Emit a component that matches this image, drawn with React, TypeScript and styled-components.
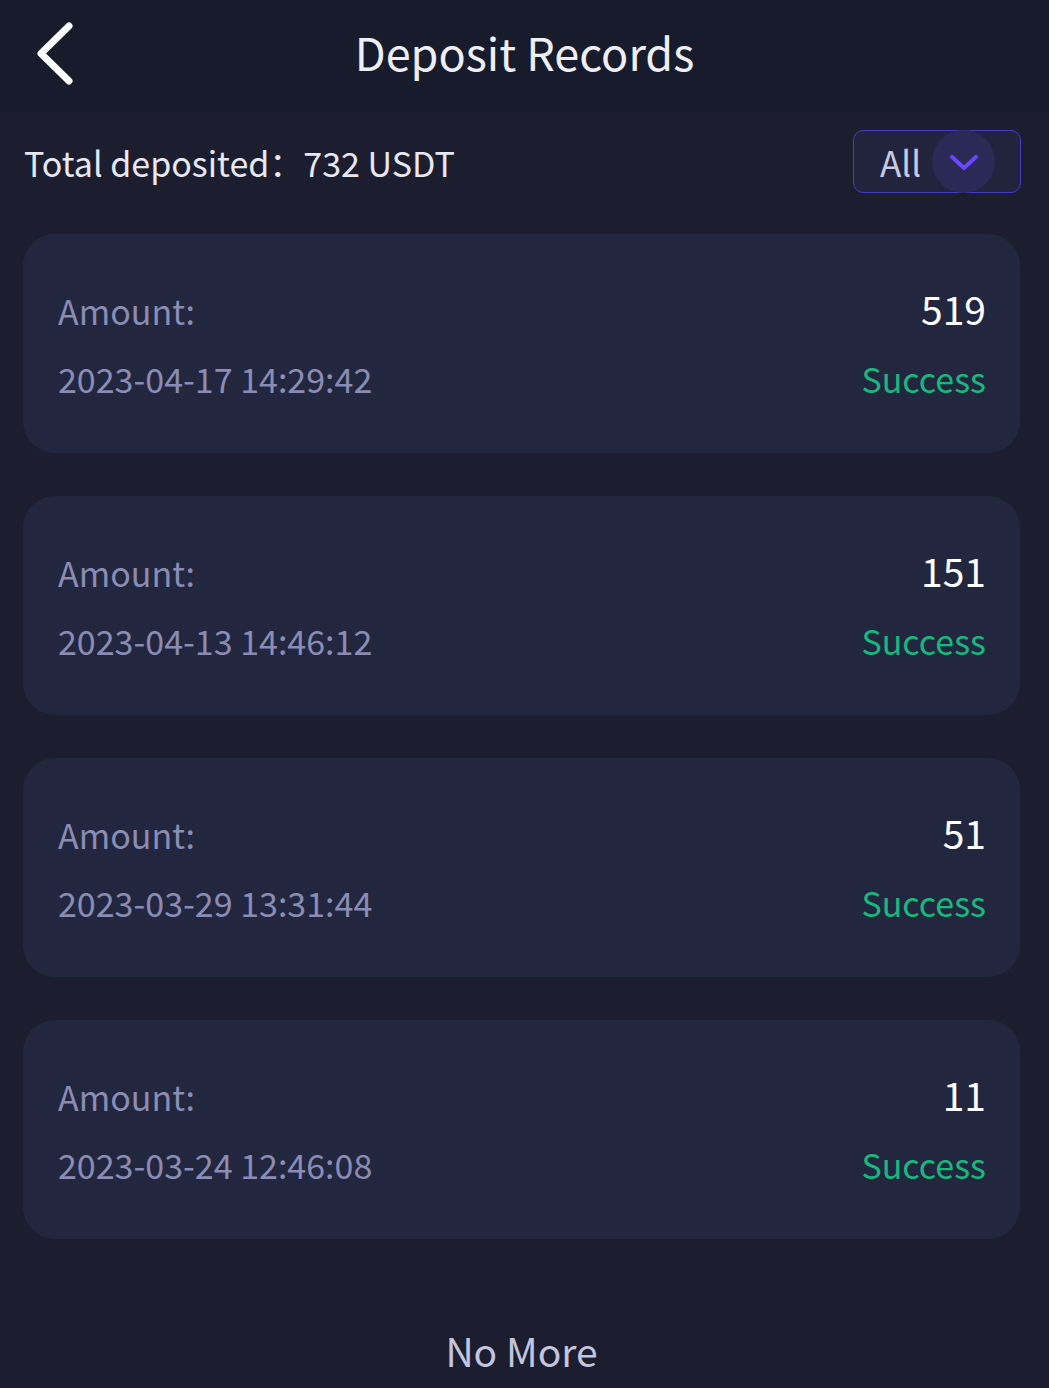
import React from "react";
import styled, { createGlobalStyle } from "styled-components";

const GlobalStyle = createGlobalStyle`
  html, body {
    margin: 0;
    padding: 0;
    background: #1c1e30;
  }
  * {
    box-sizing: border-box;
  }
  body {
    font-family: "Noto Sans CJK SC", "Noto Sans", sans-serif;
  }
`;

type DepositRecord = {
  amount: number;
  time: string;
  status: string;
};

const records: DepositRecord[] = [
  { amount: 519, time: "2023-04-17 14:29:42", status: "Success" },
  { amount: 151, time: "2023-04-13 14:46:12", status: "Success" },
  { amount: 51, time: "2023-03-29 13:31:44", status: "Success" },
  { amount: 11, time: "2023-03-24 12:46:08", status: "Success" },
];

const BackIcon = () => (
  <svg width="48" height="72" viewBox="0 0 48 72" fill="none">
    <path
      d="M34 4 L6 31.5 L34 59"
      stroke="#ffffff"
      strokeWidth="7"
      strokeLinecap="round"
      strokeLinejoin="round"
    />
  </svg>
);

const ChevronDown = () => (
  <svg width="30" height="18" viewBox="0 0 30 18" fill="none">
    <path
      d="M3 3 L15 14 L27 3"
      stroke="#6a46ff"
      strokeWidth="4"
      strokeLinecap="round"
      strokeLinejoin="round"
    />
  </svg>
);

const App = () => {
  return (
    <>
      <GlobalStyle />
      <Page>
        <Header>
          <BackButton>
            <BackIcon />
          </BackButton>
          <Title>Deposit Records</Title>
        </Header>
        <Content>
          <SummaryRow>
            <Total>Total deposited：732 USDT</Total>
            <Filter>
              <FilterLabel>All</FilterLabel>
              <FilterToggle>
                <ChevronDown />
              </FilterToggle>
            </Filter>
          </SummaryRow>
          <List>
            {records.map((r) => (
              <Card key={r.time}>
                <CardRow>
                  <Label>Amount:</Label>
                  <Amount>{r.amount}</Amount>
                </CardRow>
                <CardRow>
                  <Label>{r.time}</Label>
                  <Status>{r.status}</Status>
                </CardRow>
              </Card>
            ))}
          </List>
          <NoMore>No More</NoMore>
        </Content>
      </Page>
    </>
  );
};

export default App;

const Page = styled.div`
  width: 100%;
  min-height: 100vh;
  background: #1c1e30;
  display: flex;
  flex-direction: column;
`;
const Header = styled.div`
  position: relative;
  height: 112px;
  background: #181b2b;
  display: flex;
  align-items: center;
  justify-content: center;
  padding-bottom: 8px;
`;
const BackButton = styled.div`
  position: absolute;
  left: 35px;
  top: 22px;
  display: flex;
`;
const Title = styled.h1`
  margin: 0;
  font-weight: 400;
  font-size: 45px;
  line-height: 60px;
  color: #eeeef6;
`;
const Content = styled.div`
  display: flex;
  flex-direction: column;
  padding: 18px 29px 0 23px;
`;
const SummaryRow = styled.div`
  display: flex;
  align-items: center;
  justify-content: space-between;
  padding-left: 1px;
`;
const Total = styled.div`
  font-size: 34px;
  line-height: 48px;
  color: #e8e8f2;
  margin-top: 3px;
`;
const Filter = styled.div`
  width: 168px;
  height: 63px;
  margin-right: -1px;
  border: 1.5px solid #4a3bc4;
  border-radius: 10px;
  background: #22243e;
  display: flex;
  align-items: center;
  justify-content: space-between;
  padding: 0 25px 0 26px;
`;
const FilterLabel = styled.span`
  font-size: 35px;
  line-height: 48px;
  color: #c9c9e2;
`;
const FilterToggle = styled.div`
  width: 63px;
  height: 63px;
  border-radius: 50%;
  background: #2b2a56;
  display: flex;
  align-items: center;
  justify-content: center;
  padding-top: 2px;
`;
const List = styled.div`
  display: flex;
  flex-direction: column;
  gap: 43px;
  margin-top: 41px;
`;
const Card = styled.div`
  width: 997px;
  height: 219px;
  border-radius: 32px;
  background: #23263f;
  display: flex;
  flex-direction: column;
  gap: 23px;
  padding: 50px 34px 0 35px;
`;
const CardRow = styled.div`
  display: flex;
  align-items: baseline;
  justify-content: space-between;
  height: 48px;
`;
const Label = styled.span`
  font-size: 34px;
  line-height: 48px;
  color: #8a8cb4;
`;
const Amount = styled.span`
  font-size: 39px;
  line-height: 48px;
  color: #ffffff;
`;
const Status = styled.span`
  font-size: 34px;
  line-height: 48px;
  color: #17b87e;
`;
const NoMore = styled.div`
  margin-top: 83px;
  text-align: center;
  font-size: 39px;
  line-height: 56px;
  color: #c3c5de;
  padding-bottom: 40px;
`;
